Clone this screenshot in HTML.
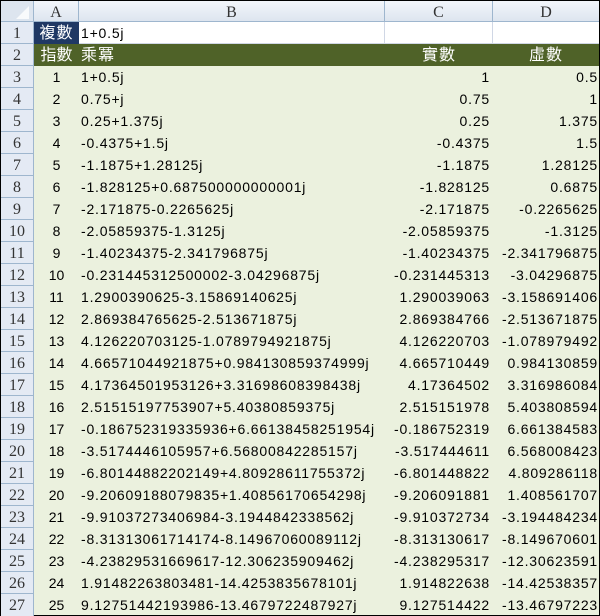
<!DOCTYPE html>
<html><head><meta charset="utf-8"><style>
*{margin:0;padding:0;box-sizing:border-box}
body{width:600px;height:616px;background:#fff;overflow:hidden;font-family:"Liberation Sans","Noto Sans CJK TC",sans-serif}
#g{position:absolute;left:0;top:0;width:600px;height:616px;border:1px solid #000;background:#ebf1de}
.r{position:absolute;left:0;width:598px;height:22px;font-size:14px;letter-spacing:0.8px;line-height:23px;color:#000}
.r div{position:absolute;top:0;height:22px;white-space:nowrap;overflow:hidden}
.h{left:0;width:33px;background:#e4eaf4;border-right:1px solid #9eb6ce;border-bottom:1px solid #9eb6ce;text-align:center;font-family:"Liberation Serif","Noto Serif CJK SC",serif;font-size:16px;letter-spacing:0;color:#333}
.a{left:33px;width:45px;text-align:center;letter-spacing:0}
.b{left:78px;width:306px;padding-left:2px}
.c{left:384px;width:108px;text-align:right;padding-right:3px}
.d{left:492px;width:106px;text-align:right;padding-right:1px}
.top div{background:linear-gradient(#f3f6fb,#dde5ef);border-right:1px solid #9eb6ce;border-bottom:1px solid #9eb6ce;text-align:center;font-family:"Liberation Serif",serif;font-size:16px;letter-spacing:0;color:#333;padding:0}
.top .h{background:#dde5ef}
.w{background:#fff}
.w .b,.w .c,.w .d{background:#fff;border-right:1px solid #d0d7e5;border-bottom:1px solid #d0d7e5}
.n{background:#4f6228;color:#fff;font-size:16px;letter-spacing:1px}
.n .h{color:#333}
</style></head><body><div id="g">
<div class="r top" style="top:0;height:22px"><div class="h" style="height:21px"><svg width="32" height="21" style="position:absolute;left:0;top:0"><polygon points="28,5 28,18 15,18" fill="#fff" opacity=".8"/></svg></div><div class="a" style="height:21px">A</div><div class="b" style="height:21px">B</div><div class="c" style="height:21px">C</div><div class="d" style="height:21px;border-right:none">D</div></div>
<div class="r w" style="top:21px"><div class="h">1</div><div class="a" style="background:#1f3864;color:#fff;font-size:16px;letter-spacing:1px">複數</div><div class="b">1+0.5j</div><div class="c"></div><div class="d" style="border-right:none"></div></div>
<div class="r n" style="top:43px"><div class="h">2</div><div class="a">指數</div><div class="b">乘冪</div><div class="c" style="text-align:center;padding:0">實數</div><div class="d" style="text-align:center;padding:0">虛數</div></div>
<div class="r" style="top:65px"><div class="h">3</div><div class="a">1</div><div class="b">1+0.5j</div><div class="c">1</div><div class="d">0.5</div></div>
<div class="r" style="top:87px"><div class="h">4</div><div class="a">2</div><div class="b">0.75+j</div><div class="c">0.75</div><div class="d">1</div></div>
<div class="r" style="top:109px"><div class="h">5</div><div class="a">3</div><div class="b">0.25+1.375j</div><div class="c">0.25</div><div class="d">1.375</div></div>
<div class="r" style="top:131px"><div class="h">6</div><div class="a">4</div><div class="b">-0.4375+1.5j</div><div class="c">-0.4375</div><div class="d">1.5</div></div>
<div class="r" style="top:153px"><div class="h">7</div><div class="a">5</div><div class="b">-1.1875+1.28125j</div><div class="c">-1.1875</div><div class="d">1.28125</div></div>
<div class="r" style="top:175px"><div class="h">8</div><div class="a">6</div><div class="b">-1.828125+0.687500000000001j</div><div class="c">-1.828125</div><div class="d">0.6875</div></div>
<div class="r" style="top:197px"><div class="h">9</div><div class="a">7</div><div class="b">-2.171875-0.2265625j</div><div class="c">-2.171875</div><div class="d">-0.2265625</div></div>
<div class="r" style="top:219px"><div class="h">10</div><div class="a">8</div><div class="b">-2.05859375-1.3125j</div><div class="c">-2.05859375</div><div class="d">-1.3125</div></div>
<div class="r" style="top:241px"><div class="h">11</div><div class="a">9</div><div class="b">-1.40234375-2.341796875j</div><div class="c">-1.40234375</div><div class="d">-2.341796875</div></div>
<div class="r" style="top:263px"><div class="h">12</div><div class="a">10</div><div class="b">-0.231445312500002-3.04296875j</div><div class="c">-0.231445313</div><div class="d">-3.04296875</div></div>
<div class="r" style="top:285px"><div class="h">13</div><div class="a">11</div><div class="b">1.2900390625-3.15869140625j</div><div class="c">1.290039063</div><div class="d">-3.158691406</div></div>
<div class="r" style="top:307px"><div class="h">14</div><div class="a">12</div><div class="b">2.869384765625-2.513671875j</div><div class="c">2.869384766</div><div class="d">-2.513671875</div></div>
<div class="r" style="top:329px"><div class="h">15</div><div class="a">13</div><div class="b">4.126220703125-1.0789794921875j</div><div class="c">4.126220703</div><div class="d">-1.078979492</div></div>
<div class="r" style="top:351px"><div class="h">16</div><div class="a">14</div><div class="b">4.66571044921875+0.984130859374999j</div><div class="c">4.665710449</div><div class="d">0.984130859</div></div>
<div class="r" style="top:373px"><div class="h">17</div><div class="a">15</div><div class="b">4.17364501953126+3.31698608398438j</div><div class="c">4.17364502</div><div class="d">3.316986084</div></div>
<div class="r" style="top:395px"><div class="h">18</div><div class="a">16</div><div class="b">2.51515197753907+5.40380859375j</div><div class="c">2.515151978</div><div class="d">5.403808594</div></div>
<div class="r" style="top:417px"><div class="h">19</div><div class="a">17</div><div class="b">-0.186752319335936+6.66138458251954j</div><div class="c">-0.186752319</div><div class="d">6.661384583</div></div>
<div class="r" style="top:439px"><div class="h">20</div><div class="a">18</div><div class="b">-3.5174446105957+6.56800842285157j</div><div class="c">-3.517444611</div><div class="d">6.568008423</div></div>
<div class="r" style="top:461px"><div class="h">21</div><div class="a">19</div><div class="b">-6.80144882202149+4.80928611755372j</div><div class="c">-6.801448822</div><div class="d">4.809286118</div></div>
<div class="r" style="top:483px"><div class="h">22</div><div class="a">20</div><div class="b">-9.20609188079835+1.40856170654298j</div><div class="c">-9.206091881</div><div class="d">1.408561707</div></div>
<div class="r" style="top:505px"><div class="h">23</div><div class="a">21</div><div class="b">-9.91037273406984-3.1944842338562j</div><div class="c">-9.910372734</div><div class="d">-3.194484234</div></div>
<div class="r" style="top:527px"><div class="h">24</div><div class="a">22</div><div class="b">-8.31313061714174-8.14967060089112j</div><div class="c">-8.313130617</div><div class="d">-8.149670601</div></div>
<div class="r" style="top:549px"><div class="h">25</div><div class="a">23</div><div class="b">-4.23829531669617-12.306235909462j</div><div class="c">-4.238295317</div><div class="d">-12.30623591</div></div>
<div class="r" style="top:571px"><div class="h">26</div><div class="a">24</div><div class="b">1.91482263803481-14.4253835678101j</div><div class="c">1.914822638</div><div class="d">-14.42538357</div></div>
<div class="r" style="top:593px"><div class="h" style="border-bottom:none">27</div><div class="a">25</div><div class="b">9.12751442193986-13.4679722487927j</div><div class="c">9.127514422</div><div class="d">-13.46797223</div></div>
</div></body></html>
